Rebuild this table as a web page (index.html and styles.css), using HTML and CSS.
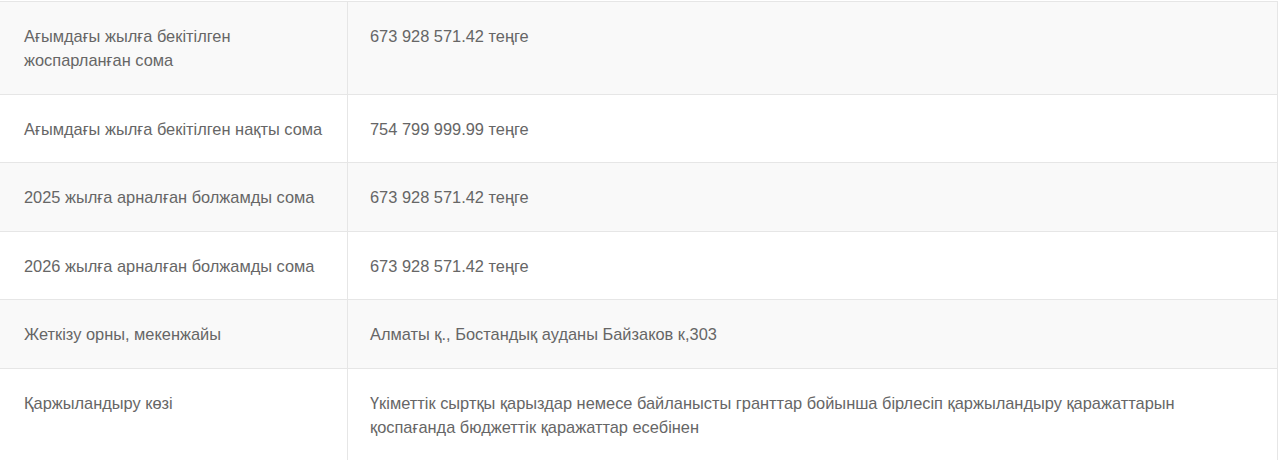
FILE: index.html
```html
<!DOCTYPE html>
<html lang="kk">
<head>
    <meta charset="UTF-8">
    <meta name="viewport" content="width=device-width, initial-scale=1.0">
    <title>Сатып алу мәліметтері</title>
    <link rel="stylesheet" href="styles.css">
</head>
<body>
    <table class="info-table">
        <tr>
            <td class="label">Ағымдағы жылға бекітілген жоспарланған сома</td>
            <td>673 928 571.42 теңге</td>
        </tr>
        <tr>
            <td class="label">Ағымдағы жылға бекітілген нақты сома</td>
            <td>754 799 999.99 теңге</td>
        </tr>
        <tr>
            <td class="label">2025 жылға арналған болжамды сома</td>
            <td>673 928 571.42 теңге</td>
        </tr>
        <tr>
            <td class="label">2026 жылға арналған болжамды сома</td>
            <td>673 928 571.42 теңге</td>
        </tr>
        <tr>
            <td class="label">Жеткізу орны, мекенжайы</td>
            <td>Алматы қ., Бостандық ауданы Байзаков к,303</td>
        </tr>
        <tr>
            <td class="label">Қаржыландыру көзі</td>
            <td>Үкіметтік сыртқы қарыздар немесе байланысты гранттар бойынша бірлесіп қаржыландыру қаражаттарын қоспағанда бюджеттік қаражаттар есебінен</td>
        </tr>
    </table>
</body>
</html>
```

FILE: styles.css
```css
body {
    margin: 0;
    padding-top: 1px;
    background: #fff;
    font-family: "Liberation Sans", Arial, sans-serif;
}
.info-table {
    width: 1278px;
    border-collapse: collapse;
    border: 1px solid #e6e6e6;
    border-left: none;
    color: #666;
    font-size: 16.4px;
    line-height: 24px;
}
.info-table td {
    padding: 22px 22px 21.5px 22px;
    border-top: 1px solid #e6e6e6;
    vertical-align: top;
}
.info-table tr:nth-child(odd) {
    background: #f9f9f9;
}
.info-table .label {
    width: 301px;
    border-right: 1px solid #e6e6e6;
    padding-left: 24px;
}
.info-table tr:last-child td {
    padding-bottom: 40px;
}
```
